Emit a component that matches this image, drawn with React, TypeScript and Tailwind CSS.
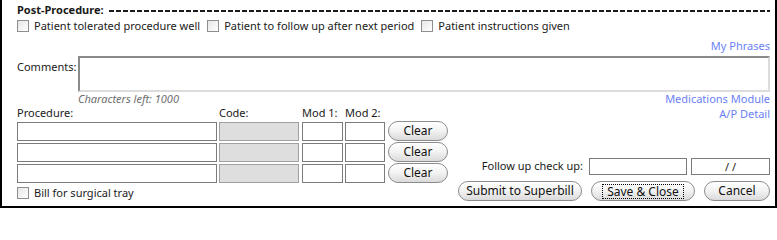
import type { ReactNode } from 'react';

const font = { fontFamily: '"Noto Sans", "Open Sans", sans-serif' };

const Check = ({ label }: { label: string }) => (
  <label className="flex items-center gap-[5px] whitespace-nowrap">
    <span className="w-[12px] h-[12px] border border-[#8e8e8e] bg-gradient-to-br from-[#e6e6e6] to-white shrink-0" />
    <span>{label}</span>
  </label>
);

const Pill = ({ children, w, focus }: { children: ReactNode; w: string; focus?: boolean }) => (
  <button
    className={`${w} h-[20px] rounded-full border border-[#8c8c8c] bg-gradient-to-b from-white via-[#f2f2f2] to-[#dadada] text-[12px] leading-none text-[#111] flex items-center justify-center shadow-[inset_0_1px_0_#fff]`}
  >
    {focus ? (
      <span className="border border-dotted border-black px-[4px] leading-[13px]">{children}</span>
    ) : (
      children
    )}
  </button>
);

const Box = ({ w, gray }: { w: string; gray?: boolean }) => (
  <div className={`${w} h-[19px] border ${gray ? 'bg-[#dedede] border-[#a0a0a0]' : 'bg-white border-[#7b7b7b]'}`} />
);

export default function App() {
  const rows = [0, 1, 2];
  return (
    <div
      style={font}
      className="w-[777px] h-[208px] bg-white border-l-2 border-r-2 border-b-2 border-black text-[11px] text-[#1a1a1a] pl-[15px] pr-[5px] pt-[2px] flex flex-col overflow-hidden"
    >
      {/* header */}
      <div className="h-[16px] flex items-center gap-[5px]">
        <span className="font-bold whitespace-nowrap">Post-Procedure:</span>
        <span className="flex-1 h-[2px] mt-[1px] bg-[repeating-linear-gradient(90deg,#1a1a1a_0_5px,transparent_5px_7px)]" />
      </div>

      {/* checkboxes */}
      <div className="h-[16px] flex items-center gap-[7px]">
        <Check label="Patient tolerated procedure well" />
        <Check label="Patient to follow up after next period" />
        <Check label="Patient instructions given" />
      </div>

      <div className="mt-[4px] h-[16px] flex items-center justify-end text-[#6b7ff5]">My Phrases</div>

      {/* comments */}
      <div className="mt-[2px] flex gap-[4px]">
        <span className="w-[57px] pt-[3px]">Comments:</span>
        <div className="flex-1 h-[36px] border-2 border-t-[#8a8a8a] border-l-[#8a8a8a] border-r-[#dcdcdc] border-b-[#dcdcdc] bg-white" />
      </div>

      <div className="h-[14px] flex items-center justify-between pl-[61px]">
        <span className="italic text-[#6e6e6e]">Characters left: 1000</span>
        <span className="text-[#6b7ff5]">Medications Module</span>
      </div>

      {/* procedures */}
      <div className="flex flex-1">
        <div className="flex flex-col">
          <div className="h-[14px] flex items-center">
            <span className="w-[202px]">Procedure:</span>
            <span className="w-[83px]">Code:</span>
            <span className="w-[43px]">Mod 1:</span>
            <span>Mod 2:</span>
          </div>
          <div className="mt-[1px] flex flex-col gap-[1px]">
            {rows.map((r) => (
              <div key={r} className="h-[20px] flex items-center">
                <Box w="w-[200px]" />
                <div className="w-[2px]" />
                <Box w="w-[80px]" gray />
                <div className="w-[3px]" />
                <Box w="w-[41px]" />
                <div className="w-[2px]" />
                <Box w="w-[40px]" />
                <div className="w-[3px]" />
                <Pill w="w-[60px]">Clear</Pill>
              </div>
            ))}
          </div>
          <div className="mt-[2px] h-[16px] flex items-center">
            <Check label="Bill for surgical tray" />
          </div>
        </div>

        <div className="flex-1 flex flex-col items-end">
          <div className="mt-[1px] h-[14px] flex items-center text-[#6b7ff5]">A/P Detail</div>
          <div className="mt-auto flex items-center">
            <span className="mr-[6px]">Follow up check up:</span>
            <div className="w-[98px] h-[17px] border border-[#7b7b7b] bg-white" />
            <div className="w-[79px] h-[17px] ml-[4px] border border-[#7b7b7b] bg-white text-[11px] leading-[15px] text-center">/ /</div>
          </div>
          <div className="mt-[6px] mb-[5px] flex items-center gap-[9px]">
            <Pill w="w-[124px]">Submit to Superbill</Pill>
            <Pill w="w-[104px]" focus>Save &amp; Close</Pill>
            <Pill w="w-[66px]">Cancel</Pill>
          </div>
        </div>
      </div>
    </div>
  );
}
